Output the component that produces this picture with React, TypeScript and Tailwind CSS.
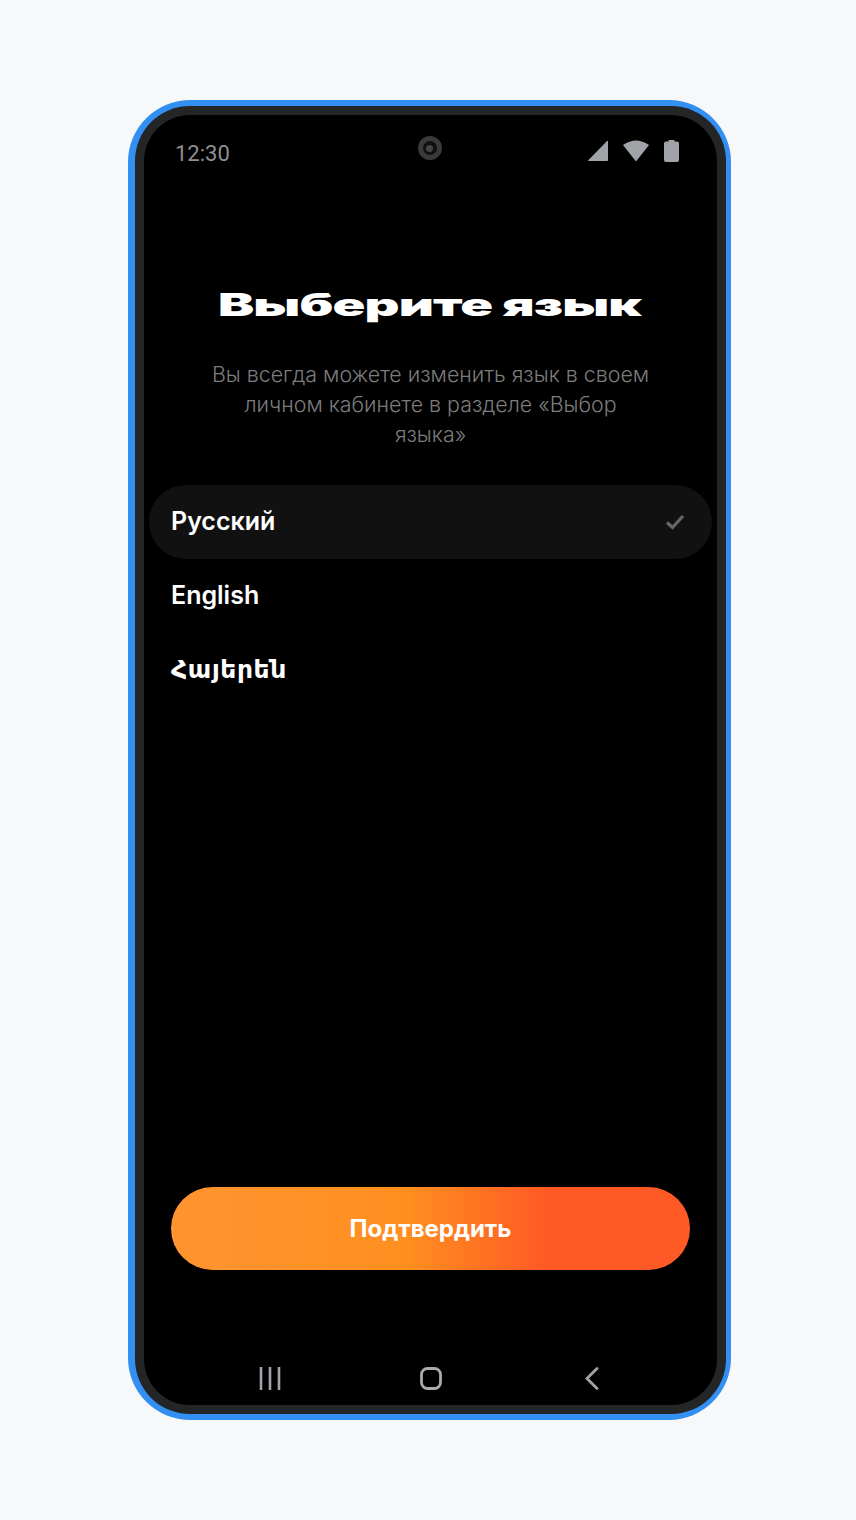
import React from 'react'

const languages = ['Русский', 'English', 'Հայերեն']

const App = () => {
  return (
    <div className="min-h-[1520px] bg-[#f7f8f9] pt-[100px] pl-[128px] font-['Inter',sans-serif]">
      <div className="w-[603px] h-[1320px] rounded-[62px] bg-[#3390f2] pt-[6px] pb-[6px] pl-[7px] pr-[5px]">
        <div className="h-full rounded-[55px] bg-[#242526] pt-[9px] pb-[9px] pl-[9px] pr-[9px]">
          <div className="h-full rounded-[46px] bg-black flex flex-col overflow-hidden">
            {/* status bar */}
            <div className="grid grid-cols-3 items-start h-[61px] pt-[23px] px-[31px]">
              <span className="font-['Roboto',sans-serif] text-[22px] leading-[32px] text-[#8f8f8f]">12:30</span>
              <div className="justify-self-center w-[24px] h-[24px] rounded-full border-[5px] border-[#3a3a3a] bg-[#111111] -ml-[1px] -mt-[2px] flex items-center justify-center">
                <div className="w-[7px] h-[7px] rounded-full bg-[#464646]" />
              </div>
              <div className="justify-self-end flex items-center gap-[14px] mr-[7px] mt-[1px]">
                <svg width="21" height="21" viewBox="0 0 21 21"><path d="M20.5 1v19.5H1.500z" fill="#a0a3a8" stroke="#a0a3a8" strokeLinejoin="round" /></svg>
                <svg width="28" height="23" viewBox="0 0 28 23"><path d="M1 6Q14-3 27 6L14 22.500z" fill="#a0a3a8" /></svg>
                <svg width="15" height="22" viewBox="0 0 15 22"><path d="M4.500 1.500V0h6v1.500h2.500a2 2 0 0 1 2 2V20a2 2 0 0 1-2 2H2a2 2 0 0 1-2-2V3.500a2 2 0 0 1 2-2z" fill="#a0a3a8" /></svg>
              </div>
            </div>

            <h1 className="mt-[107px] -ml-[2px] text-center text-[31px] leading-[44px] font-black text-white scale-x-[1.75] tracking-[-0.5px]">Выберите язык</h1>

            <p className="mt-[32px] mx-[66px] text-center text-[21.4px] leading-[30px] font-light text-[#7c7c7c]">
              Вы всегда можете изменить язык в своем личном кабинете в разделе «Выбор языка»
            </p>

            {/* language list */}
            <div className="mt-[36px] mx-[5px] flex flex-col">
              {languages.map((lang, i) => (
                <div key={lang} className={`h-[74px] rounded-full pl-[22px] pr-[27px] flex items-center justify-between ${i === 0 ? 'bg-[#111111]' : ''}`}>
                  <span className={`text-[25px] font-semibold text-white font-['Inter','DejaVu_Sans',sans-serif] ${i === 2 ? 'tracking-[0.6px]' : ''}`}>{lang}</span>
                  {i === 0 && (
                    <svg width="20" height="16" viewBox="0 0 20 16" fill="none"><path d="M2 8.500l5.500 5L18 2" stroke="#666666" strokeWidth="3.200" /></svg>
                  )}
                </div>
              ))}
            </div>

            {/* confirm */}
            <div className="mt-auto mx-[27px]">
              <button className="w-full h-[83px] pt-[1px] rounded-full bg-[linear-gradient(90deg,#ff9430_0%,#ff8f1f_45%,#ff5a24_72%,#ff5a26_100%)] text-white text-[24px] font-bold">
                Подтвердить
              </button>
            </div>

            {/* nav bar */}
            <div className="mt-[97px] mb-[15px] pl-[115px] flex items-center">
              <svg width="22" height="23" viewBox="0 0 22 23" fill="none" stroke="#a0a3a8" strokeWidth="2.600"><path d="M2 0v23M11 0v23M20 0v23" /></svg>
              <svg className="ml-[139px]" width="22" height="23" viewBox="0 0 22 23" fill="none" stroke="#a9abb0" strokeWidth="2.800"><rect x="1.500" y="1.500" width="19" height="20" rx="6" /></svg>
              <svg className="ml-[142px]" width="16" height="23" viewBox="0 0 16 23" fill="none" stroke="#a0a3a8" strokeWidth="2.800" strokeLinecap="round"><path d="M13 1.500L3 11.500l10 10" /></svg>
            </div>
          </div>
        </div>
      </div>
    </div>
  )
}

export default App
